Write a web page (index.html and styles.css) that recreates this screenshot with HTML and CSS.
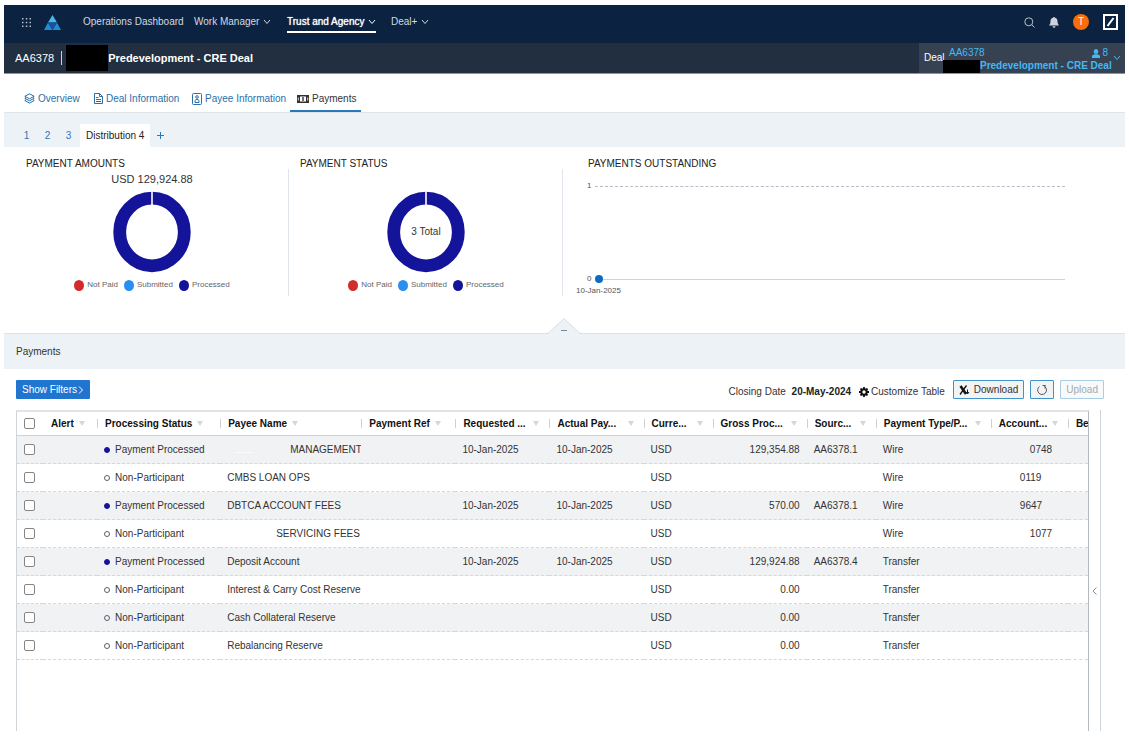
FILE: index.html
```html
<!DOCTYPE html>
<html lang="en">
<head>
<meta charset="utf-8">
<title>Trust and Agency - Payments</title>
<meta name="viewport" content="width=device-width, initial-scale=1">
<link rel="stylesheet" href="styles.css">
</head>
<body>
<svg class="defs" width="0" height="0" aria-hidden="true">
  <symbol id="chev" viewBox="0 0 8 6"><path d="M1 1l3 3.500L7 1" fill="none" stroke="currentColor"/></symbol>
  <symbol id="donut" viewBox="0 0 78 82"><ellipse cx="39" cy="41" rx="32.300" ry="33.800" fill="none" stroke="#14149a" stroke-width="12.800"/><path d="M39 0v15" stroke="#fff" stroke-width="1.600"/></symbol>
</svg>

<header class="topbar">
  <button class="icon-btn apps" aria-label="Applications"><svg width="11" height="11" viewBox="0 0 11 11" fill="#b3bdc9"><path d="M1 1h1.500v1.500H1zM4.800 1h1.500v1.500H4.800zM8.500 1H10v1.500H8.500zM1 4.800h1.500v1.500H1zM4.800 4.800h1.500v1.500H4.800zM8.500 4.800H10v1.500H8.500zM1 8.500h1.500V10H1zM4.800 8.500h1.500V10H4.800zM8.500 8.500H10V10H8.500z"/></svg></button>
  <a class="logo" href="#" aria-label="Home"><svg width="17" height="15" viewBox="0 0 17 15"><path d="M8.500 0L13 7.500H4z" fill="#4db8e8"/><path d="M4 7.500L8.500 15H0z" fill="#1c8fd0"/><path d="M13 7.500L17 15H8.500z" fill="#1c8fd0"/><path d="M4 7.500h9L8.500 15z" fill="#1b4fa0"/></svg></a>
  <nav class="mainnav">
    <a href="#">Operations Dashboard</a>
    <a href="#">Work Manager <svg class="chev"><use href="#chev"/></svg></a>
    <a href="#" class="current">Trust and Agency <svg class="chev"><use href="#chev"/></svg></a>
    <a href="#">Deal+ <svg class="chev"><use href="#chev"/></svg></a>
  </nav>
  <div class="tools">
    <button class="icon-btn" aria-label="Search"><svg width="11" height="11" viewBox="0 0 11 11" fill="none" stroke="#b8c2cd"><circle cx="4.800" cy="4.800" r="4"/><path d="M7.700 7.700l2.800 2.800"/></svg></button>
    <button class="icon-btn" aria-label="Notifications"><svg width="10" height="11" viewBox="0 0 10 11" fill="#ccd3da"><path d="M5 0a1 1 0 0 1 1 .8C7.800 1.200 8.500 2.500 8.500 4c0 2 .5 3.200 1.500 4.500H0C1 7.200 1.500 6 1.500 4c0-1.500.7-2.800 2.500-3.200A1 1 0 0 1 5 0zM3.500 9.300h3a1.500 1.500 0 0 1-3 0z"/></svg></button>
    <button class="avatar" aria-label="Account T">T</button>
    <a class="brand" href="#" aria-label="Bank home"><svg width="15" height="16" viewBox="0 0 15 16" fill="none" stroke="#fff"><path d="M1 1h13v14H1z" stroke-width="2"/><path d="M4.500 12l6-8" stroke-width="2"/></svg></a>
  </div>
</header>

<div class="dealbar">
  <h1><span class="deal-id">AA6378</span><span class="bar"></span><span class="redact"></span>Predevelopment - CRE Deal</h1>
  <div class="deal-box">
    <span class="deal-label">Deal</span>
    <div class="deal-links">
      <div class="deal-line"><a href="#">AA6378</a><span class="people"><svg width="8" height="9" viewBox="0 0 8 9" fill="currentColor"><ellipse cx="4" cy="2.500" rx="2.300" ry="2.500"/><path d="M0 9V7.200C0 6 1.500 5.500 3 5.200h2C6.500 5.500 8 6 8 7.200V9z"/></svg>8</span></div>
      <div class="deal-name"><span class="redact"></span><a href="#">Predevelopment - CRE Deal</a></div>
    </div>
    <button class="icon-btn" aria-label="Expand deal"><svg class="chev"><use href="#chev"/></svg></button>
  </div>
</div>

<nav class="tabs">
  <a href="#"><svg width="11" height="11" viewBox="0 0 11 11" fill="none" stroke="currentColor"><path d="M5.500.8l4.700 2.500-4.700 2.500L.8 3.300zM2 4.500L.8 5.300l4.700 2.500 4.700-2.500L9 4.500M2 6.700l-1.200.8 4.700 2.600 4.700-2.600L9 6.700"/></svg>Overview</a>
  <a href="#"><svg width="9" height="11" viewBox="0 0 9 11" fill="none" stroke="currentColor"><path d="M.5.5h5l3 3v7h-8zM5.500.5v3h3M2 4.500h2.500M2 6.500h5M2 8.500h5"/></svg>Deal Information</a>
  <a href="#"><svg width="10" height="12" viewBox="0 0 10 12" fill="none" stroke="currentColor"><rect x=".5" y=".5" width="9" height="11" rx="1"/><circle cx="5" cy="4" r="1.300"/><path d="M3 9.500V7.500l1-.9h2l1 .9v2z"/></svg>Payee Information</a>
  <a href="#" class="current"><svg width="12" height="8" viewBox="0 0 12 8"><path d="M0 0h12v8H0z" fill="#333"/><path d="M3 1.500h6v5H3z" fill="#fff"/><path d="M1.300 2.500v3M10.700 2.500v3" stroke="#fff" stroke-width=".8"/><path d="M6 2v4" stroke="#333" stroke-width="1.400"/></svg>Payments</a>
</nav>

<nav class="subtabs">
  <a href="#">1</a><a href="#">2</a><a href="#">3</a><a href="#" class="current">Distribution 4</a>
  <button class="icon-btn" aria-label="Add distribution"><svg width="7" height="7" viewBox="0 0 7 7" stroke="#2a78b8"><path d="M3.500 0v7M0 3.500h7"/></svg></button>
</nav>

<section class="charts">
  <article class="panel">
    <h2>PAYMENT AMOUNTS</h2>
    <p class="amount">USD 129,924.88</p>
    <div class="donut"><svg width="78" height="82"><use href="#donut"/></svg></div>
    <ul class="legend"><li class="red">Not Paid</li><li class="blue">Submitted</li><li class="navy">Processed</li></ul>
  </article>
  <article class="panel">
    <h2>PAYMENT STATUS</h2>
    <p class="amount"></p>
    <div class="donut"><svg width="78" height="82"><use href="#donut"/></svg><span class="total">3 Total</span></div>
    <ul class="legend"><li class="red">Not Paid</li><li class="blue">Submitted</li><li class="navy">Processed</li></ul>
  </article>
  <article class="panel outstanding">
    <h2>PAYMENTS OUTSTANDING</h2>
    <div class="plot">
      <div class="axis top"><span>1</span><i></i></div>
      <div class="axis"><span>0</span><b></b><i></i></div>
      <div class="date">10-Jan-2025</div>
    </div>
  </article>
</section>

<div class="band">
  <h2>Payments</h2>
  <button class="collapse" aria-label="Collapse charts"><svg width="36" height="17" viewBox="0 0 36 17"><path d="M0 17L1.500 16 18 .7 34.500 16l1.500 1z" fill="#edf2f7"/><path d="M0 15.500h2L18 .7l16 14.800h2" fill="none" stroke="#d9dee2"/><path d="M15 12.500h6" stroke="#7e8890"/></svg></button>
</div>

<div class="toolbar">
  <button class="primary">Show Filters <svg width="6" height="8" viewBox="0 0 6 8" fill="none" stroke="#fff"><path d="M1 .5L4.500 4 1 7.500"/></svg></button>
  <div class="actions">
    <span class="closing">Closing Date <strong>20-May-2024</strong></span>
    <button class="plain"><svg width="10" height="10" viewBox="0 0 10 10" fill="none" stroke="#111"><circle cx="5" cy="5" r="2.700" stroke-width="2"/><path d="M5 0v2M5 8v2M0 5h2M8 5h2M1.500 1.500l1.300 1.300M7.200 7.200l1.300 1.300M1.500 8.500l1.300-1.300M7.200 2.800l1.300-1.300" stroke-width="1.800"/></svg>Customize Table</button>
    <button class="outline"><svg width="11" height="10" viewBox="0 0 11 10" fill="none" stroke="#111"><path d="M1.500 1l5.500 8" stroke-width="2.600"/><path d="M7.500.5L1 9.500" stroke-width="1.300"/><path d="M8.500 4.500v4M7 7l1.500 2L10 7"/></svg>Download</button>
    <button class="outline" aria-label="Refresh"><svg width="12" height="12" viewBox="0 0 12 12" fill="none" stroke="#555"><path d="M3.500 2.500a4.400 4.400 0 1 0 5.500.3M6.500 1.500H9.500M9 1v3.500"/></svg></button>
    <button class="outline" disabled>Upload</button>
  </div>
</div>

<div class="grid-area">
  <div class="table-wrap">
    <table>
      <colgroup><col class="c-check"><col class="c-alert"><col class="c-status"><col class="c-payee"><col class="c-date"><col class="c-date"><col class="c-date"><col class="c-small"><col class="c-date"><col class="c-small"><col class="c-type"><col class="c-account"><col class="c-last"></colgroup>
      <thead>
        <tr>
          <th class="check"><input type="checkbox" aria-label="Select all"></th>
          <th class="nosep"><div>Alert</div></th>
          <th><div>Processing Status</div></th>
          <th><div>Payee Name</div></th>
          <th><div>Payment Ref</div></th>
          <th class="cut"><div><span>Requested ...</span></div></th>
          <th class="cut"><div><span>Actual Pay...</span></div></th>
          <th class="cut"><div><span>Curre...</span></div></th>
          <th class="cut"><div><span>Gross Proc...</span></div></th>
          <th class="cut"><div><span>Sourc...</span></div></th>
          <th class="cut"><div><span>Payment Type/P...</span></div></th>
          <th class="cut"><div><span>Account...</span></div></th>
          <th class="last"><div>Be</div></th>
        </tr>
      </thead>
      <tbody>
        <tr><td class="check"><input type="checkbox" aria-label="Select row 1"></td><td></td><td><span class="st done">Payment Processed</span></td><td><span class="mask wide smudge"></span>MANAGEMENT</td><td></td><td>10-Jan-2025</td><td>10-Jan-2025</td><td>USD</td><td class="num">129,354.88</td><td>AA6378.1</td><td>Wire</td><td><span class="mask acct-long"></span>0748</td><td></td></tr>
        <tr><td class="check"><input type="checkbox" aria-label="Select row 2"></td><td></td><td><span class="st">Non-Participant</span></td><td>CMBS LOAN OPS</td><td></td><td></td><td></td><td>USD</td><td></td><td></td><td>Wire</td><td><span class="mask acct"></span>0119</td><td></td></tr>
        <tr><td class="check"><input type="checkbox" aria-label="Select row 3"></td><td></td><td><span class="st done">Payment Processed</span></td><td>DBTCA ACCOUNT FEES</td><td></td><td>10-Jan-2025</td><td>10-Jan-2025</td><td>USD</td><td class="num">570.00</td><td>AA6378.1</td><td>Wire</td><td><span class="mask acct"></span>9647</td><td></td></tr>
        <tr><td class="check"><input type="checkbox" aria-label="Select row 4"></td><td></td><td><span class="st">Non-Participant</span></td><td><span class="mask mid"></span>SERVICING FEES</td><td></td><td></td><td></td><td>USD</td><td></td><td></td><td>Wire</td><td><span class="mask acct-long"></span>1077</td><td></td></tr>
        <tr><td class="check"><input type="checkbox" aria-label="Select row 5"></td><td></td><td><span class="st done">Payment Processed</span></td><td>Deposit Account</td><td></td><td>10-Jan-2025</td><td>10-Jan-2025</td><td>USD</td><td class="num">129,924.88</td><td>AA6378.4</td><td>Transfer</td><td></td><td></td></tr>
        <tr><td class="check"><input type="checkbox" aria-label="Select row 6"></td><td></td><td><span class="st">Non-Participant</span></td><td>Interest &amp; Carry Cost Reserve</td><td></td><td></td><td></td><td>USD</td><td class="num">0.00</td><td></td><td>Transfer</td><td></td><td></td></tr>
        <tr><td class="check"><input type="checkbox" aria-label="Select row 7"></td><td></td><td><span class="st">Non-Participant</span></td><td>Cash Collateral Reserve</td><td></td><td></td><td></td><td>USD</td><td class="num">0.00</td><td></td><td>Transfer</td><td></td><td></td></tr>
        <tr><td class="check"><input type="checkbox" aria-label="Select row 8"></td><td></td><td><span class="st">Non-Participant</span></td><td>Rebalancing Reserve</td><td></td><td></td><td></td><td>USD</td><td class="num">0.00</td><td></td><td>Transfer</td><td></td><td></td></tr>
      </tbody>
    </table>
  </div>
  <button class="side" aria-label="Open side panel"><svg width="5" height="8" viewBox="0 0 5 8" fill="none" stroke="#8a97a3"><path d="M4.500.5L1 4l3.500 3.500"/></svg></button>
</div>
</body>
</html>
```

FILE: styles.css
```css
*, *::before, *::after { box-sizing: border-box; }
body {
  margin: 0;
  padding: 5px 4px 9px;
  min-height: 100vh;
  display: flex;
  flex-direction: column;
  background: #fff;
  color: #333;
  font: 10px/12px "Liberation Sans", Arial, sans-serif;
}
h1, h2, p, ul { margin: 0; padding: 0; font: inherit; }
a { color: inherit; text-decoration: none; }
button { font: inherit; color: inherit; margin: 0; padding: 0; border: 0; background: none; display: flex; align-items: center; justify-content: center; white-space: nowrap; }
svg { display: block; flex: none; }
.defs { position: absolute; }
.chev { width: 8px; height: 6px; }

/* Top bar */
.topbar { display: flex; height: 38px; flex: none; align-items: center; background: #0b2240; color: #d3dae1; padding: 0 7px 4px 17px; }
.logo { margin: 0 22px 0 12px; }
.mainnav { display: grid; grid-template-columns: 111px 93px 104px auto; align-self: stretch; align-items: center; white-space: nowrap; }
.mainnav a { display: flex; align-items: center; gap: 4px; height: 22px; padding-top: 1px; border-bottom: 2px solid transparent; justify-self: start; }
.mainnav .current { color: #fff; border-color: #fff; text-shadow: 0 0 1px #fff; }
.tools { margin-left: auto; display: flex; align-items: center; gap: 14px; }
.avatar { width: 16px; height: 16px; border-radius: 8px; background: #fa6e0a; color: #fff; }

/* Deal bar */
.dealbar { display: flex; justify-content: space-between; height: 31px; flex: none; background: #222f40; border-bottom: 1px solid #8795a5; }
.dealbar h1 { display: flex; align-items: center; color: #fff; font-size: 11px; font-weight: bold; padding-left: 11px; white-space: nowrap; }
.deal-id { font-weight: normal; }
.bar { width: 1px; height: 14px; background: #cdd3d9; margin: 0 4px 0 7px; }
.redact { background: #000; }
.dealbar h1 .redact { width: 42px; height: 26px; }
.deal-box { display: flex; align-items: center; background: #364252; color: #44b8f3; padding: 0 2px 0 5px; }
.deal-label { width: 19px; color: #fff; }
.deal-links { align-self: end; width: 168px; }
.deal-line { display: flex; justify-content: space-between; padding: 0 3px 1px 6px; }
.people { display: flex; gap: 2px; align-items: center; }
.deal-name { display: flex; font-weight: bold; white-space: nowrap; }
.deal-name .redact { width: 37px; height: 13px; flex: none; }
.deal-box .icon-btn { width: 12px; }

/* Tabs */
.tabs { display: grid; grid-template-columns: 70px 98px 98px auto; justify-content: start; height: 39px; flex: none; align-items: end; padding-left: 20px; border-bottom: 1px solid #e0e5e9; color: #2a6fa8; white-space: nowrap; }
.tabs a { display: flex; align-items: center; gap: 3px; height: 25px; border-bottom: 2px solid transparent; }
.tabs .current { color: #333; border-color: #2a78b8; padding: 0 5px 0 7px; }
.subtabs { display: flex; align-items: end; height: 34px; flex: none; background: #edf2f7; padding-left: 12px; color: #2a78b8; }
.subtabs a, .subtabs button { height: 23px; line-height: 23px; min-width: 21px; text-align: center; }
.subtabs .current { background: #fff; color: #222; padding: 0 6px; margin-left: 1px; }

/* Charts */
.charts { display: grid; grid-template-columns: 274fr 274fr 562fr; padding: 11px 0 0 11px; height: 186px; flex: none; }
.panel { height: 138px; background: linear-gradient(#dfe5ea, #dfe5ea) right bottom / 1px 127px no-repeat; }
.panel h2 { padding-left: 11px; color: #222; }
.amount { height: 18px; font-size: 11px; line-height: 18px; text-align: center; }
.donut { display: grid; place-items: center; height: 87px; }
.donut > * { grid-area: 1 / 1; }
.total { color: #333; }
.legend { display: flex; justify-content: center; gap: 6px; list-style: none; font-size: 8px; color: #666; padding-top: 4px; }
.legend li { display: flex; align-items: center; gap: 3px; }
.legend li::before { content: ""; width: 10px; height: 11px; border-radius: 50%; background: #14149a; }
.legend .red::before { background: #d32b2b; }
.legend .blue::before { background: #288ef0; }
.outstanding { background: none; padding-left: 14px; }
.plot { padding: 10px 60px 0 10px; font-size: 8px; color: #555; }
.axis { display: flex; align-items: center; height: 12px; }
.axis span { width: 8px; }
.axis i { flex: 1; border-top: 1px solid #cfd3d6; }
.axis b { width: 8px; height: 8px; border-radius: 4px; background: #0b6cc0; }
.axis.top { margin-bottom: 81px; }
.axis.top i { border-top: 1px dashed #b5bec6; }
.date { margin-left: -11px; white-space: nowrap; }

/* Section band */
.band { position: relative; height: 36px; flex: none; background: #edf2f7; border-top: 1px solid #dde2e6; padding: 12px; }
.collapse { position: absolute; left: 50%; top: -16px; margin-left: -19px; }

/* Toolbar */
.toolbar { display: flex; justify-content: space-between; height: 41px; flex: none; padding: 11px 21px 0 12px; }
.primary { height: 19px; padding: 0 6px; gap: 1px; background: #1f75d0; color: #fff; border-radius: 1px; }
.actions { display: flex; height: 19px; align-items: center; white-space: nowrap; }
.closing, .plain { padding-top: 4px; }
.closing strong { color: #222; margin: 0 8px 0 3px; }
.plain { gap: 2px; margin-right: 8px; }
.outline { height: 19px; min-width: 23px; border: 1px solid #3f93c6; background: #f1f3f5; gap: 4px; padding: 0 5px; border-radius: 1px; margin-right: 6px; }
.outline:last-child { margin-right: 0; }
.outline:disabled { color: #a3a9ae; border-color: #a9cde4; background: #f8f9fa; }

/* Table */
.grid-area { display: flex; flex: 1; padding: 0 24px 0 12px; }
.table-wrap { flex: 1; min-width: 0; overflow: hidden; border: 1px solid #cfd4d9; border-width: 2px 1px 0; border-top-color: #e0e3e7; border-right-color: #b3b9bf; }
table { width: 100%; table-layout: fixed; border-collapse: separate; border-spacing: 0; }
.c-check { width: 26px; }
.c-alert { width: 54px; }
.c-status { width: 123px; }
.c-payee { width: 141px; }
.c-date { width: 94px; }
.c-small { width: 69px; }
.c-type { width: 115px; }
.c-account { width: 77px; }
.c-last { width: 20px; }
th, td { padding: 0 7px; text-align: left; white-space: nowrap; overflow: hidden; }
th { height: 24px; color: #111; padding: 0; border-bottom: 1px solid #cfd3d8; }
th div { display: flex; align-items: center; gap: 5px; padding-left: 7px; border-left: 1px solid #ccd1d6; height: 9px; line-height: 9px; overflow: visible; }
th.nosep div { border-left-color: transparent; }
th div::after { content: ""; border: 3px solid transparent; border-top: 5px solid #d2d7dc; border-bottom: 0; }
th.last div::after { display: none; }
th.cut div { justify-content: space-between; padding-right: 10px; }
td { height: 28px; border-bottom: 1px dashed #d3d8dd; }
tbody tr:nth-child(odd) td { background: #f1f2f4; }
th.check, td.check { padding: 0 0 0 7px; }
.check input { display: block; appearance: none; width: 11px; height: 11px; margin: 0; border: 1px solid #858585; border-radius: 2px; background: #fff; }
.num { text-align: right; }
.st { display: flex; align-items: center; gap: 5px; }
.st::before { content: ""; width: 6px; height: 6px; border: 1px solid #56616c; border-radius: 3px; }
.st.done::before { background: #14149a; border-color: #14149a; }
.mask { display: inline-block; height: 10px; }
.mask.wide { width: 63px; }
.mask.mid { width: 49px; }
.mask.acct { width: 22px; }
.mask.acct-long { width: 32px; }
.smudge { background: linear-gradient(#f9fafa, #f9fafa) 8px bottom / 18px 1px no-repeat; }
.side { width: 12px; border-right: 1px solid #cfd4d9; padding-top: 40px; }
```
